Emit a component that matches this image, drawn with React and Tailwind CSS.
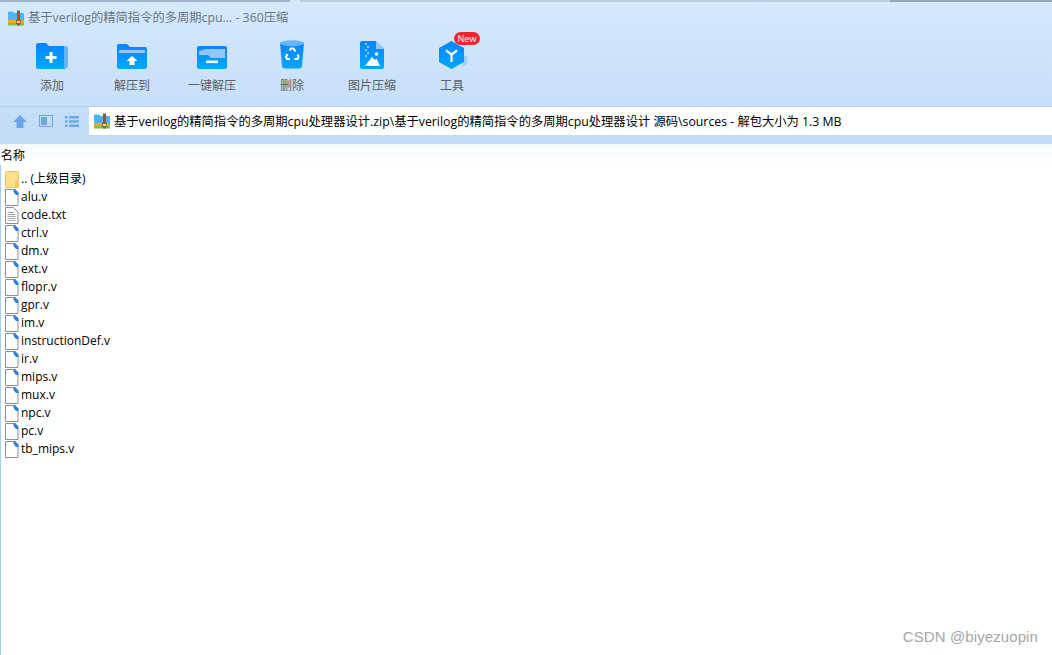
import React from "react";

const cjk = "font-['Open_Sans','Noto_Sans_CJK_SC',sans-serif]";

function ZipIcon() {
  return (
    <svg width="16" height="16" viewBox="0 0 16 16" className="shrink-0">
      <path d="M0 2.500a1 1 0 0 1 1-1h4l1.500 1.500H15a1 1 0 0 1 1 1V10H0z" fill="#4db5f5" />
      <rect x="0" y="10" width="16" height="3" fill="#f5a623" />
      <rect x="0" y="13" width="16" height="2.500" fill="#7cc13f" />
      <rect x="9" y="0.500" width="3" height="15" fill="#a0562a" />
      <rect x="8.500" y="10.500" width="4" height="3" fill="#f8d77a" stroke="#8a4a20" strokeWidth="0.7" />
    </svg>
  );
}

function Grad({ id }) {
  return (
    <defs>
      <linearGradient id={id} x1="0" y1="0" x2="0" y2="1">
        <stop offset="0" stopColor="#0a84ff" />
        <stop offset="1" stopColor="#00a8ff" />
      </linearGradient>
    </defs>
  );
}

function AddIcon() {
  return (
    <svg width="32" height="26" viewBox="0 0 32 26">
      <Grad id="fa" />
      <path d="M0 2a2 2 0 0 1 2-2h8l3 3h15a2 2 0 0 1 2 2v19a2 2 0 0 1-2 2H2a2 2 0 0 1-2-2z" fill="url(#fa)" />
      <path d="M28 3h2a2 2 0 0 1 2 2v18a2 2 0 0 1-2 2h-2z" fill="#66b5ff" />
      <path d="M13.500 9h3v4h4v3h-4v4h-3v-4h-4v-3h4z" fill="#fff" />
    </svg>
  );
}

function ExtractIcon() {
  return (
    <svg width="30" height="25" viewBox="0 0 30 25">
      <Grad id="fb" />
      <path d="M0 2a2 2 0 0 1 2-2h8l3 3h15a2 2 0 0 1 2 2v18a2 2 0 0 1-2 2H2a2 2 0 0 1-2-2z" fill="url(#fb)" />
      <path d="M2 6h26v3H2z" fill="#8ec8ff" />
      <path d="M15 12l5.500 5h-3v4h-5v-4h-3z" fill="#fff" />
    </svg>
  );
}

function OneClickIcon() {
  return (
    <svg width="30" height="23" viewBox="0 0 30 23">
      <Grad id="fc" />
      <rect width="30" height="23" rx="2" fill="url(#fc)" />
      <path d="M9 3h19v9H14l-3-3H2V5z" fill="#8ec8ff" />
      <rect x="9" y="14.500" width="12" height="2.600" fill="#fff" />
    </svg>
  );
}

function TrashIcon() {
  return (
    <svg width="24" height="29" viewBox="0 0 24 29">
      <Grad id="fd" />
      <path d="M0 3h24l-2 23a3 3 0 0 1-3 2.500H5A3 3 0 0 1 2 26z" fill="url(#fd)" />
      <ellipse cx="12" cy="3.200" rx="12" ry="3" fill="#66b5ff" />
      <path d="M9.500 10.500l1.500-2h2.500l2 3M17.500 14.500l1 2-1 2.500h-3M10 19H7l-1-2 1.500-3" fill="none" stroke="#fff" strokeWidth="2" />
    </svg>
  );
}

function ImageZipIcon() {
  return (
    <svg width="24" height="28" viewBox="0 0 24 28">
      <Grad id="fe" />
      <path d="M2 0h14l8 8v18a2 2 0 0 1-2 2H2a2 2 0 0 1-2-2V2a2 2 0 0 1 2-2z" fill="url(#fe)" />
      <path d="M16 0l8 8h-8z" fill="#8ec8ff" />
      <path d="M5 2h2v2H5zM7 5h2v2H7zM5 8h2v2H5zM7 11h2v2H7zM5 14h2v2H5z" fill="#8ec8ff" />
      <path d="M5 25l7-9 3 3 1.500-1.500L20 25z" fill="#fff" />
      <circle cx="16.500" cy="13" r="1.800" fill="#fff" />
    </svg>
  );
}

function ToolIcon() {
  return (
    <svg width="30" height="28" viewBox="0 0 30 28" className="ml-[3px]">
      <Grad id="ff" />
      <path d="M22 13l6 2.500.5 7-5.500 3.500z" fill="#9dcfff" />
      <path d="M12.500 0L25 7v14L12.500 28 0 21V7z" fill="url(#ff)" />
      <path d="M7 9.500l5.500 4 5.500-4M12.500 13.500V21" fill="none" stroke="#fff" strokeWidth="2.200" />
    </svg>
  );
}

function FileIcon({ text }) {
  return (
    <svg width="14" height="17" viewBox="0 0 14 17" className="shrink-0">
      <path d="M.5.500h8l4.500 4.500v11.500H.5z" fill="#fff" stroke="#8a8f96" />
      {text ? (
        <path d="M2.500 5.500h6M2.500 7.500h8M2.500 9.500h8M2.500 11.500h8M2.500 13.500h8" stroke="#8a8f96" strokeWidth="0.8" />
      ) : (
        <path d="M8.500 0h1.500l3.500 3.500V6h-2.500L8.500 3z" fill="#2f7fd6" />
      )}
    </svg>
  );
}

function FolderIcon() {
  return (
    <svg width="14" height="17" viewBox="0 0 14 17" className="shrink-0">
      <path d="M.5 1.500a1 1 0 0 1 1-1h11a1 1 0 0 1 1 1v15h-12a1 1 0 0 1-1-1z" fill="#fde08a" stroke="#e8c468" />
      <path d="M10 10.500l3.500-1.500v7.500H10z" fill="#f3c95e" />
    </svg>
  );
}

const tools = [
  { label: "添加", icon: <AddIcon /> },
  { label: "解压到", icon: <ExtractIcon /> },
  { label: "一键解压", icon: <OneClickIcon /> },
  { label: "删除", icon: <TrashIcon /> },
  { label: "图片压缩", icon: <ImageZipIcon /> },
  { label: "工具", icon: <ToolIcon />, badge: true },
];

const files = [
  "alu.v", "code.txt", "ctrl.v", "dm.v", "ext.v", "flopr.v", "gpr.v", "im.v",
  "instructionDef.v", "ir.v", "mips.v", "mux.v", "npc.v", "pc.v", "tb_mips.v",
];

function App() {
  return (
    <div className={`relative w-[1052px] h-[655px] overflow-hidden bg-white ${cjk}`}>
      <div className="h-[135px] bg-gradient-to-b from-[#d5e9fe] to-[#c2dcf6]">
        <div className="flex h-[2px]">
          <div className="w-[290px] bg-[#a3b4c6]" />
          <div className="w-[10px] bg-[#d5e9fe]" />
          <div className="w-[590px] bg-[#bccee1]" />
          <div className="flex-1 bg-[#97a6b6]" />
        </div>
        <div className="flex items-center h-[30px] pl-2 pt-[2px] gap-1 text-[12.3px] text-[#6b7580]">
          <ZipIcon />
          <span>基于verilog的精简指令的多周期cpu... - 360压缩</span>
        </div>
        <div className="flex pl-3 h-[74px]">
          {tools.map((t) => (
            <div key={t.label} className="relative w-20 flex flex-col items-center">
              <div className="h-[28px] mt-[9px] flex items-end justify-center">{t.icon}</div>
              <div className="mt-[9px] text-xs text-[#5d5f63]">{t.label}</div>
              {t.badge && (
                <div className="absolute left-[42px] top-0 w-[26px] h-[13px] rounded-full bg-[#f5232e] text-white text-[9px] leading-[13px] text-center">New</div>
              )}
            </div>
          ))}
        </div>
        <div className="flex h-[29px] border-t border-[#b4d2ef]">
          <div className="w-[89px] flex items-center pl-[13px] gap-[12px]">
            <svg width="14" height="13" viewBox="0 0 14 13">
              <path d="M7 0l7 7h-3.500v6h-7V7H0z" fill="#6ea4ea" />
            </svg>
            <svg width="14" height="12" viewBox="0 0 14 12">
              <rect x=".5" y=".5" width="13" height="11" fill="none" stroke="#6ea4ea" />
              <rect x="2" y="2" width="6" height="8" fill="#6ea4ea" />
            </svg>
            <svg width="14" height="11" viewBox="0 0 14 11">
              <path d="M0 0h2.500v2.500H0zM4 0h10v2.500H4zM0 4.200h2.500v2.500H0zM4 4.200h10v2.500H4zM0 8.400h2.500v2.500H0zM4 8.400h10v2.500H4z" fill="#6ea4ea" />
            </svg>
          </div>
          <div className="flex-1 bg-white flex items-center pl-[5px] gap-1 text-[12.3px] text-black whitespace-nowrap">
            <ZipIcon />
            <span className="pt-[2px]">基于verilog的精简指令的多周期cpu处理器设计.zip\基于verilog的精简指令的多周期cpu处理器设计 源码\sources - 解包大小为 1.3 MB</span>
          </div>
        </div>
      </div>
      <div className="h-[9px] bg-[#c2dcf6]" />
      <div className="h-[21px] pl-[1px] pt-[2px] flex items-center text-xs text-black bg-gradient-to-b from-[#f5f9fe] to-white">名称</div>
      <div className="pl-[4px] pt-[5px] border-l border-[#a9cdf2] h-[490px] text-xs text-black">
        <div className="flex items-center h-[18px] gap-[2px]">
          <FolderIcon />
          <span>.. (上级目录)</span>
        </div>
        {files.map((f) => (
          <div key={f} className="flex items-center h-[18px] gap-[2px]">
            <FileIcon text={f === "code.txt"} />
            <span>{f}</span>
          </div>
        ))}
      </div>
      <div className="absolute right-[14px] bottom-[7px] font-['Liberation_Sans',sans-serif] text-[15px] tracking-[0.1px] text-[#a6a6a6]">CSDN @biyezuopin</div>
    </div>
  );
}

export default App;
